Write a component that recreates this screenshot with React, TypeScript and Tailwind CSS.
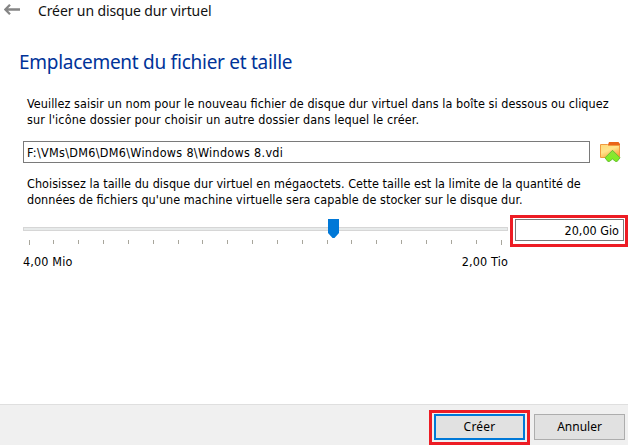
import React from "react";

const ticks = [29, 53, 78, 103, 128, 153, 178, 202, 227, 252, 277, 302, 327, 351, 376, 401, 426, 451, 476, 501];

function FolderIcon() {
  return (
    <svg width="22" height="22" viewBox="0 0 22 22" className="block">
      <defs>
        <linearGradient id="folder" x1="0" y1="0" x2="0.6" y2="1">
          <stop offset="0" stopColor="#ffd878" />
          <stop offset="0.5" stopColor="#ffe48c" />
          <stop offset="1" stopColor="#fba63c" />
        </linearGradient>
        <linearGradient id="chevron" x1="0" y1="0" x2="0" y2="1">
          <stop offset="0" stopColor="#90e23c" />
          <stop offset="1" stopColor="#7cf01e" />
        </linearGradient>
      </defs>
      <path d="M7.5 5 L9 1 H18.5 L20 3 V5Z" fill="#ea6418" />
      <path d="M0.5 3.5 H7.5 L8.5 4.5 H19.5 V16.5 H0.5Z" fill="url(#folder)" stroke="#f09a40" />
      <path d="M12.5 9.3 L20 16.8 L17.2 20.4 H15.5 L12.5 18 L9.5 20.4 H7.8 L5 16.8Z" fill="url(#chevron)" stroke="#62b830" strokeWidth="0.9" />
    </svg>
  );
}

export default function App() {
  return (
    <div className="flex h-[445px] w-[628px] flex-col overflow-hidden bg-white font-['DejaVu_Sans_Condensed','DejaVu_Sans',sans-serif] text-[12.5px] leading-4 text-black">
      <header className="flex h-[22px] items-start pl-1 font-['Noto_Sans',sans-serif]">
        <svg width="16" height="12" viewBox="0 0 16 12" className="mt-1 block shrink-0">
          <path d="M6 0.8 L1.3 5.5 L6 10.2 M1 5.5 H16" fill="none" stroke="#858585" strokeWidth="2.3" />
        </svg>
        <h1 className="ml-[18px] whitespace-nowrap text-[14px] leading-[22px] tracking-[-0.12px] text-[#111]">Créer un disque dur virtuel</h1>
      </header>
      <main className="flex h-[382px] flex-col">
        <h2 className="mt-[26px] ml-[19px] h-[28px] whitespace-nowrap font-['Noto_Sans',sans-serif] text-[19px] leading-[28px] tracking-[-0.28px] text-[#003399] [font-feature-settings:'liga']">Emplacement du fichier et taille</h2>
        <div className="mt-[20px] ml-[27px] whitespace-nowrap [font-feature-settings:'liga']">
          <p className="tracking-[0.06px]">Veuillez saisir un nom pour le nouveau fichier de disque dur virtuel dans la boîte si dessous ou cliquez</p>
          <p className="tracking-[0.12px]">sur l'icône dossier pour choisir un autre dossier dans lequel le créer.</p>
        </div>
        <div className="mt-[13px] flex h-[22px] pl-[23px]">
          <div className="h-[22px] w-[567px] border border-[#7a7a7a] pl-[3px] leading-[21px] tracking-[0.3px]">F:\VMs\DM6\DM6\Windows 8\Windows 8.vdi</div>
          <div className="ml-[10px]"><FolderIcon /></div>
        </div>
        <div className="mt-[13px] ml-[27px] whitespace-nowrap tracking-[0.04px] [font-feature-settings:'liga']">
          <p>Choisissez la taille du disque dur virtuel en mégaoctets. Cette taille est la limite de la quantité de</p>
          <p>données de fichiers qu'une machine virtuelle sera capable de stocker sur le disque dur.</p>
        </div>
        <div className="mt-[7px] flex pl-[23px]">
          <div className="w-[485px]">
            <div className="relative mt-3 h-1 border border-[#d6d6d6] bg-[#e7eaea]">
              <svg width="11" height="19" viewBox="0 0 11 19" className="absolute top-[-9px] left-[304px]">
                <path d="M0 0 H11 V14 L6.5 19 H4.5 L0 14Z" fill="#0078d7" />
              </svg>
            </div>
            <svg width="485" height="5" viewBox="23 0 485 5" className="mt-[9px] block">
              {ticks.map((x) => <rect key={x} x={x} width="1" height={x === 29 || x === 501 ? 5 : 4} fill="#a8a69c" />)}
            </svg>
            <div className="mt-[9px] flex justify-between tracking-[0.15px]">
              <span>4,00 Mio</span><span>2,00 Tio</span>
            </div>
          </div>
          <div className="ml-[2px] h-[32px] w-[118px] border-[3px] border-[#ed1c24] pt-[1px] pl-[2px]">
            <div className="h-[22px] w-[109px] border border-[#7a7a7a] pr-[4px] text-right leading-[21px]">20,00 Gio</div>
          </div>
        </div>
      </main>
      <footer className="flex h-[41px] border-t border-[#dfdfdf] bg-[#f0f0f0] pt-[5px] pl-[429px] font-['Noto_Sans',sans-serif] text-[12px]">
        <div className="h-[35px] w-[101px] border-[3px] border-[#ed1c24] pt-[1px] pl-[2px]">
          <button className="block h-[26px] w-[91px] border-2 border-[#0078d7] bg-[#e1e1e1] leading-[22px] tracking-[0.2px]">Créer</button>
        </div>
        <button className="mt-1 ml-1 block h-[26px] w-[91px] border border-[#adadad] bg-[#e1e1e1] leading-[24px]">Annuler</button>
      </footer>
    </div>
  );
}
